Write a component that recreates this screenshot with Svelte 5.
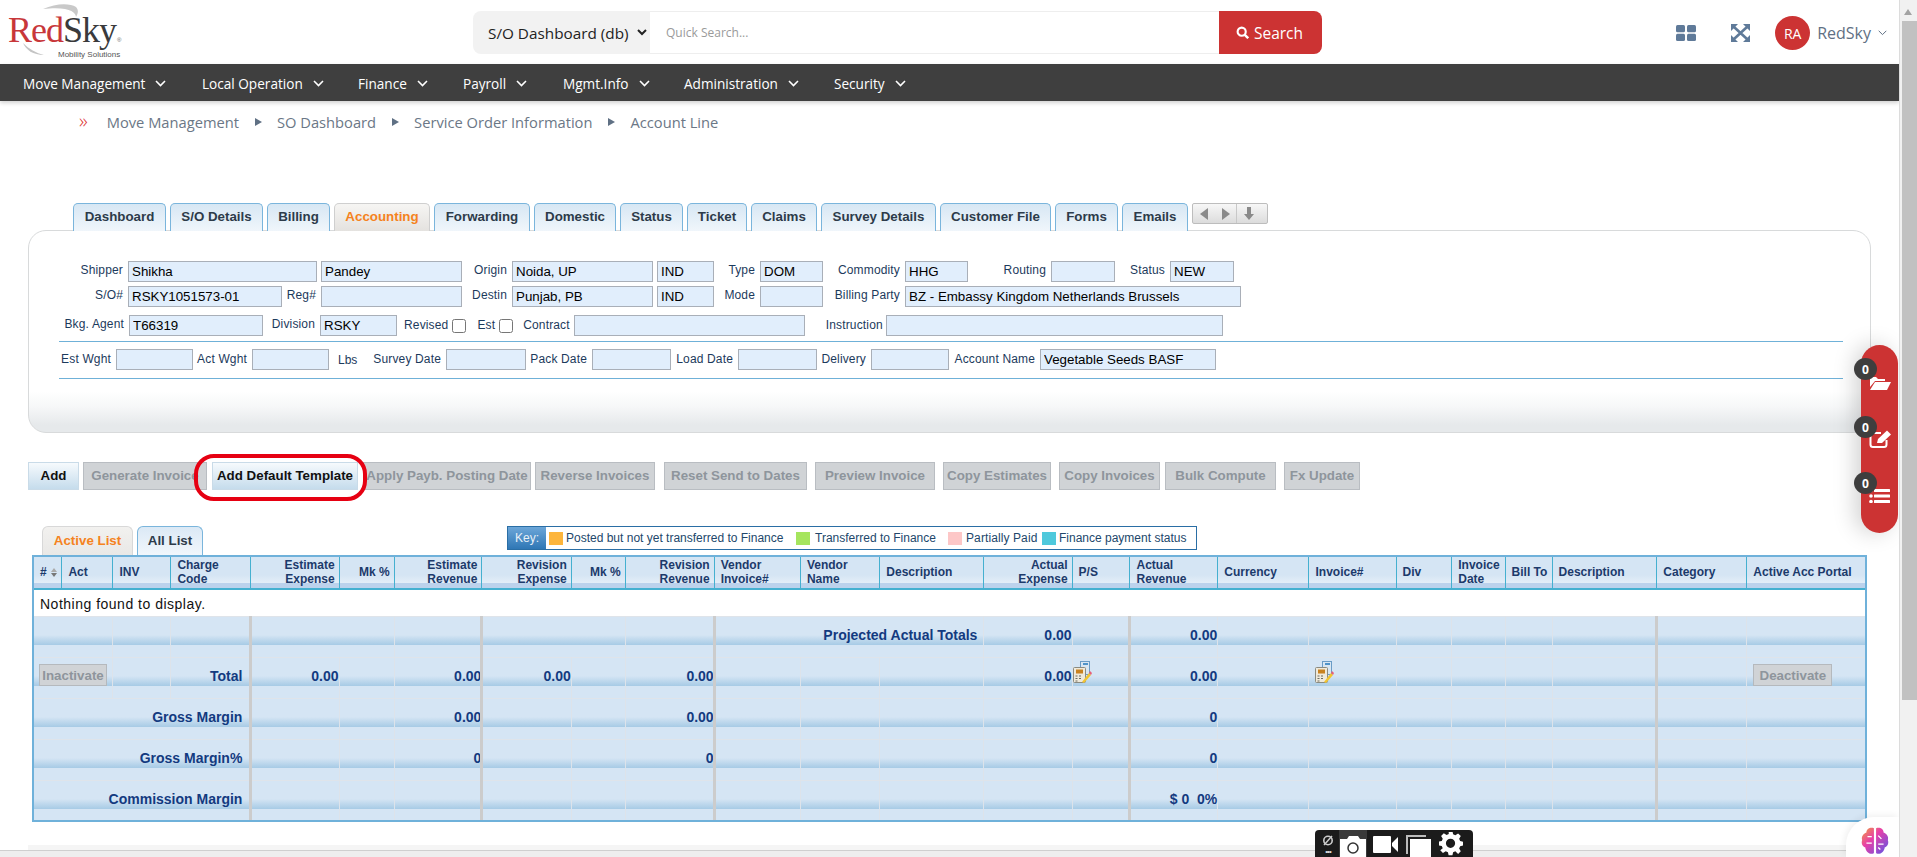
<script>
  const nav = [['Move Management',179], ['Local Operation',156], ['Finance',105], ['Payroll',100], ['Mgmt.Info',121], ['Administration',150], ['Security',100]];
  const crumbs = ['Move Management', 'SO Dashboard', 'Service Order Information', 'Account Line'];
  const tabs = [['Dashboard',93],['S/O Details',93],['Billing',63],['Accounting',96],['Forwarding',96],['Domestic',82],['Status',63],['Ticket',60],['Claims',66],['Survey Details',115],['Customer File',111],['Forms',63],['Emails',66]];

  function layoutRow(items) {
    let x = 59;
    return items.map((it) => {
      const [label, l, r, value] = it;
      const seg = { label, labelW: l - x, w: r - l, value };
      x = r;
      return seg;
    });
  }
  const rows = [
    { cls: 'r1', items: [['Shipper',128,317,'Shikha'],['',321,462,'Pandey'],['Origin',512,653,'Noida, UP'],['',657,714,'IND'],['Type',760,823,'DOM'],['Commodity',905,968,'HHG'],['Routing',1051,1115,''],['Status',1170,1234,'NEW']] },
    { cls: 'r2', items: [['S/O#',128,282,'RSKY1051573-01'],['Reg#',321,462,''],['Destin',512,653,'Punjab, PB'],['',657,714,'IND'],['Mode',760,823,''],['Billing Party',905,1241,'BZ - Embassy Kingdom Netherlands Brussels']] },
    { cls: 'r3', items: [['Bkg. Agent',129,263,'T66319'],['Division',320,397,'RSKY']] , extra: true },
    { cls: 'r4', items: [['Est Wght',116,193,''],['Act Wght',252,329,''],['Survey Date',446,526,''],['Pack Date',592,671,''],['Load Date',738,817,''],['Delivery',871,949,''],['Account Name',1040,1216,'Vegetable Seeds BASF']] }
  ].map((r) => ({ ...r, segs: layoutRow(r.items) }));

  const btnData = [['Add',28,79,1],['Generate Invoice',83,207,0],['Add Default Template',212,358,1],['Apply Payb. Posting Date',363,531,0],['Reverse Invoices',535,655,0],['Reset Send to Dates',664,807,0],['Preview Invoice',815,935,0],['Copy Estimates',943,1051,0],['Copy Invoices',1059,1160,0],['Bulk Compute',1165,1276,0],['Fx Update',1284,1360,0]];
  let prev = 0;
  const buttons = btnData.map(([t, l, r, on]) => {
    const b = { t, ml: l - prev, w: r - l, on };
    prev = r;
    return b;
  });

  const edges = [34,62.4,113.5,171.4,251.4,339.6,394.7,482.4,571.8,625.7,714.7,801,880.4,984.5,1072.7,1130.6,1218.4,1309.6,1396.7,1452.4,1505.7,1552.7,1657.5,1747.5,1865];
  const widths = edges.slice(1).map((e, i) => e - edges[i]);
  const heads = [['#','l'],['Act','l'],['INV','l'],['Charge Code','l'],['Estimate Expense','r'],['Mk %','r'],['Estimate Revenue','r'],['Revision Expense','r'],['Mk %','r'],['Revision Revenue','r'],['Vendor Invoice#','l'],['Vendor Name','l'],['Description','l'],['Actual Expense','r'],['P/S','l'],['Actual Revenue','l'],['Currency','l'],['Invoice#','l'],['Div','l'],['Invoice Date','l'],['Bill To','l'],['Description','l'],['Category','l'],['Active Acc Portal','l']];
</script>

{#snippet calc()}
  <svg class="calc" width="19" height="22" viewBox="0 0 19 22"><rect x="7.500" y=".5" width="9" height="13" fill="#d8e6f2" stroke="#6a9cc6"/><rect x="10" y="2" width="5" height="2" fill="#4f93c9"/><rect x=".5" y="6.500" width="12" height="15" rx="1" fill="#efe9da" stroke="#8b8b80"/><rect x="3" y="8.500" width="7" height="4" fill="#c9821f"/><path d="M2.500 15h2M6 15h2M2.500 17.500h2M6 17.500h2M2.500 20h2" stroke="#6b6b60"/><path d="M9 21l7-9 2 2-7 8z" fill="#f2c430"/><path d="M16 12l1-2 2 2-1 2z" fill="#e6607a"/></svg>
{/snippet}

<div class="page">
  <header class="top">
    <div class="logo">
      <svg class="swoosh" width="125" height="64" viewBox="0 0 125 64" aria-hidden="true">
        <path d="M43 9 C56 3 70 3 76 7 C79 10 78 14 76 17 C76 12 68 6 43 9Z" fill="#c9c9c9"/>
        <path d="M23 43 C26 50 33 55 44 55 C36 53 29 49 23 43Z" fill="#c4c4c4"/>
      </svg>
      <div class="wordmark"><span class="red">Red</span><span class="sky">Sky</span><sup>®</sup></div>
      <div class="mobility">Mobility Solutions</div>
    </div>
    <div class="search">
      <select class="scope"><option>S/O Dashboard (db)</option></select>
      <input class="quick" placeholder="Quick Search..." />
      <button class="go">
        <svg width="13" height="13" viewBox="0 0 16 16"><circle cx="7" cy="7" r="5" fill="none" stroke="#fff" stroke-width="2.600"/><path d="M10.500 10.500 L15 15" stroke="#fff" stroke-width="3"/></svg>
        Search
      </button>
    </div>
    <div class="tools">
      <svg class="grid" width="20" height="16" viewBox="0 0 20 16"><g fill="#5f7a99"><rect width="9" height="7.200" rx="1.500"/><rect x="11" width="9" height="7.200" rx="1.500"/><rect y="8.800" width="9" height="7.200" rx="1.500"/><rect x="11" y="8.800" width="9" height="7.200" rx="1.500"/></g></svg>
      <svg class="expand" width="19" height="18" viewBox="0 0 19 18"><g fill="#5f7a99"><path d="M0 0h7L0 7zM19 0h-7l7 7zM0 18h7l-7-7zM19 18h-7l7-7z"/></g><path d="M3 3l13 12M16 3L3 15" stroke="#5f7a99" stroke-width="2.600"/></svg>
      <span class="avatar">RA</span>
      <span class="user">RedSky</span>
      <svg width="9" height="6" viewBox="0 0 9 6"><path d="M.7.8l3.800 3.800L8.300.8" fill="none" stroke="#5f7084" stroke-width="1"/></svg>
    </div>
  </header>

  <nav class="nav">
    {#each nav as [item, w]}
      <span class="nav-item" style="width:{w}px">{item}
        <svg width="11" height="7" viewBox="0 0 11 7"><path d="M1 1l4.500 4.500L10 1" fill="none" stroke="#fff" stroke-width="1.600"/></svg>
      </span>
    {/each}
  </nav>

  <div class="crumbs">
    <span class="dbl">»</span>
    {#each crumbs as c, i}
      {#if i > 0}<span class="tri"></span>{/if}
      <span class="crumb">{c}</span>
    {/each}
  </div>

  <div class="tabs">
    {#each tabs as [t, w]}
      <span class="tab" class:cur={t === 'Accounting'} style="width:{w}px">{t}</span>
    {/each}
    <span class="pager">
      <i class="arr l"></i><i class="arr r"></i><b class="sep"></b>
      <svg width="10" height="13" viewBox="0 0 10 13"><path d="M3 0h4v7h3l-5 6-5-6h3z" fill="#8a8a8a"/></svg>
    </span>
  </div>

  <section class="panel">
    {#each rows as row}
      <div class="frow {row.cls}">
        {#each row.segs as s}
          <span class="lab" class:empty={!s.label} style="width:{s.labelW}px">{s.label}</span>
          <input class="fld" style="width:{s.w}px" readonly value={s.value} />
        {/each}
        {#if row.extra}
          <span class="chk-lab rv">Revised</span><input type="checkbox" class="cb" />
          <span class="chk-lab es">Est</span><input type="checkbox" class="cb" />
          <span class="chk-lab ct">Contract</span><input class="fld w-contract" readonly />
          <span class="chk-lab ins">Instruction</span><input class="fld w-instr" readonly />
        {/if}
      </div>
      {#if row.cls === 'r3'}<hr class="rule first" />{/if}
      {#if row.cls === 'r4'}<hr class="rule second" />{/if}
    {/each}
    <span class="lbs">Lbs</span>
  </section>

  <div class="actions">
    {#each buttons as b}
      <button class="act" class:on={b.on} style="margin-left:{b.ml}px;width:{b.w}px">{b.t}</button>
    {/each}
  </div>

  <div class="listbar">
    <span class="ltab cur">Active List</span>
    <span class="ltab">All List</span>
    <div class="key">
      <span class="key-h">Key:</span>
      <i class="sw orange"></i><span class="kt k1">Posted but not yet transferred to Finance</span>
      <i class="sw green"></i><span class="kt k2">Transferred to Finance</span>
      <i class="sw pink"></i><span class="kt k3">Partially Paid</span>
      <i class="sw cyan"></i><span class="kt k4">Finance payment status</span>
    </div>
  </div>

  <table class="grid-t">
    <colgroup>
      {#each widths as w}<col style="width:{w}px" />{/each}
    </colgroup>
    <thead>
      <tr>
        {#each heads as [h, a], i}
          <th class={a}>{h}{#if i === 0}<span class="sort"><i class="up"></i><i class="dn"></i></span>{/if}</th>
        {/each}
      </tr>
    </thead>
    <tbody>
      <tr class="none"><td colspan="24">Nothing found to display.</td></tr>
      <tr class="ft">
        <td colspan="2"></td><td></td><td class="tk"></td>
        <td colspan="2"></td><td class="tk"></td><td colspan="2"></td><td class="tk"></td>
        <td class="lbl" colspan="3">Projected Actual Totals</td>
        <td class="val">0.00</td><td class="tk"></td><td class="val">0.00</td>
        <td></td><td></td><td></td><td></td><td></td><td class="tk"></td><td></td><td></td>
      </tr>
      <tr class="ft">
        <td colspan="2" class="btncell"><span class="mini in">Inactivate</span></td><td></td>
        <td class="lbl tk">Total</td>
        <td class="val">0.00</td><td></td><td class="val tk">0.00</td><td class="val">0.00</td><td></td>
        <td class="val tk">0.00</td><td></td><td></td><td></td>
        <td class="val">0.00</td>
        <td class="tk icell">{@render calc()}</td>
        <td class="val">0.00</td><td></td>
        <td class="icell i2c">{@render calc()}</td>
        <td></td><td></td><td></td><td class="tk"></td><td></td>
        <td class="btncell de"><span class="mini out">Deactivate</span></td>
      </tr>
      <tr class="ft">
        <td colspan="4" class="lbl tk">Gross Margin</td>
        <td></td><td></td><td class="val tk">0.00</td><td></td><td></td>
        <td class="val tk">0.00</td><td></td><td></td><td></td><td></td>
        <td class="tk"></td><td class="val">0</td>
        <td></td><td></td><td></td><td></td><td></td><td class="tk"></td><td></td><td></td>
      </tr>
      <tr class="ft">
        <td colspan="4" class="lbl tk">Gross Margin%</td>
        <td></td><td></td><td class="val tk">0</td><td></td><td></td>
        <td class="val tk">0</td><td></td><td></td><td></td><td></td>
        <td class="tk"></td><td class="val">0</td>
        <td></td><td></td><td></td><td></td><td></td><td class="tk"></td><td></td><td></td>
      </tr>
      <tr class="ft last">
        <td colspan="4" class="lbl tk">Commission Margin</td>
        <td></td><td></td><td class="tk"></td><td></td><td></td>
        <td class="tk"></td><td></td><td></td><td></td><td></td>
        <td class="tk"></td><td class="val">$ 0&nbsp;&nbsp;0%</td>
        <td></td><td></td><td></td><td></td><td></td><td class="tk"></td><td></td><td></td>
      </tr>
    </tbody>
  </table>

  <div class="foot"><div class="foot-a"></div><div class="foot-b"></div></div>

  <div class="ring"></div>

  <aside class="pill">
    <span class="badge b1">0</span>
    <span class="badge b2">0</span>
    <span class="badge b3">0</span>
    <svg class="ic i1" width="22" height="15" viewBox="0 0 22 15"><path d="M1 2h6l2 2h7v2H6L1 12z" fill="#fff"/><path d="M6 7h16l-4 8H1z" fill="#fff"/></svg>
    <svg class="ic i2" width="24" height="19" viewBox="0 0 24 19"><path d="M12 3H4a2.500 2.500 0 0 0-2.500 2.500v9A2.500 2.500 0 0 0 4 17h11a2.500 2.500 0 0 0 2.500-2.500V10" fill="none" stroke="#fff" stroke-width="2"/><path d="M8 13l1-4 9-8.500 4 4L13 13z" fill="#fff"/></svg>
    <svg class="ic i3" width="21" height="14" viewBox="0 0 21 14"><g fill="#fff"><rect x="5" y="0" width="16" height="3" rx=".5"/><rect x="5" y="5.500" width="16" height="3" rx=".5"/><rect x="5" y="11" width="16" height="3" rx=".5"/><circle cx="2" cy="1.500" r="1.800"/><circle cx="2" cy="7" r="1.800"/><circle cx="2" cy="12.500" r="1.800"/></g></svg>
  </aside>

  <div class="rec">
    <span class="rec-a">
      <svg width="12" height="13" viewBox="0 0 12 13"><circle cx="6" cy="6.500" r="4.200" fill="none" stroke="#ccc" stroke-width="1.600"/><path d="M2 11L10 2" stroke="#ccc" stroke-width="1.500"/></svg>
      <em>•••</em>
    </span>
    <span class="cam"><svg width="26" height="22" viewBox="0 0 26 22"><path d="M0 4h7l2-3h9l2 3h6v18H0z" fill="#fff"/><circle cx="13" cy="13" r="5" fill="none" stroke="#333" stroke-width="1.500"/></svg></span>
    <svg class="vid" width="25" height="17" viewBox="0 0 25 17"><rect width="18" height="17" rx="1" fill="#fff"/><path d="M19 7l6-6v15l-6-6z" fill="#fff"/></svg>
    <svg class="cp" width="25" height="22" viewBox="0 0 25 22"><path d="M0 0h20v2H2v17H0z" fill="#bbb"/><rect x="4" y="4" width="21" height="18" fill="#fff"/></svg>
    <svg class="gear" width="24" height="24" viewBox="0 0 24 24"><path fill="#fff" fill-rule="evenodd" d="M10 0h4l.7 3.300 2.300 1 2.900-1.800 2.800 2.800L21 8.200l1 2.300 3 .7v4l-3 .7-1 2.300 1.700 2.900-2.800 2.800L17 21.200l-2.300 1-.7 3h-4l-.7-3-2.300-1-2.900 1.700-2.800-2.800L3.900 18l-1-2.300-3-.7v-4l3-.7 1-2.300L2.200 5.100 5 2.300l2.900 1.800 2.300-1zM12 8a4.800 4.800 0 1 0 0 9.600A4.800 4.800 0 0 0 12 8z" transform="translate(0 -1) scale(.96)"/></svg>
  </div>

  <div class="brain">
    <svg width="30" height="30" viewBox="0 0 28 28">
      <defs><linearGradient id="bg" x1="0" y1="0" x2="1" y2="1"><stop offset="0" stop-color="#f2a03a"/><stop offset=".4" stop-color="#e83fa8"/><stop offset="1" stop-color="#5a55e8"/></linearGradient></defs>
      <path d="M13 2C9 1 6 3 6 6 3 7 1 10 2 13c-1 3 0 6 3 7 0 3 3 6 6 6 1 0 2-.5 2-1zM15 2c4-1 7 1 7 4 3 1 5 4 4 7 1 3 0 6-3 7 0 3-3 6-6 6-1 0-2-.5-2-1z" fill="url(#bg)"/>
      <path d="M7 10h4M6 16h5M17 9l3 3M17 17h5M19 22l-2-2" stroke="#fff" stroke-width="1.200" fill="none"/>
    </svg>
  </div>

  <div class="sbar">
    <i class="sb-up"></i>
    <div class="sb-thumb"></div>
  </div>
</div>

<style>
  :global(body) { margin: 0; background: #fff; overflow: hidden; }
  * { box-sizing: border-box; }
  .page { position: relative; width: 1917px; height: 857px; overflow: hidden; padding-right: 18px; font-family: "Liberation Sans", Arial, sans-serif; }

  .top { display: flex; align-items: flex-start; height: 64px; }
  .logo { position: relative; width: 473px; height: 64px; flex: none; }
  .swoosh { position: absolute; left: 0; top: 0; }
  .wordmark { position: absolute; left: 8px; top: 10px; font-family: "Liberation Serif", serif; font-size: 36px; line-height: 40px; letter-spacing: -1px; white-space: nowrap; }
  .red { color: #c8373a; }
  .sky { color: #3a3a3c; }
  .wordmark sup { font-size: 6px; color: #666; font-family: "Liberation Sans", sans-serif; vertical-align: baseline; letter-spacing: 0; margin-left: 1px; }
  .mobility { position: absolute; left: 58px; top: 50px; font-size: 8px; color: #555; white-space: nowrap; }

  .search { display: flex; margin-top: 11px; height: 43px; width: 849px; flex: none; }
  .scope { width: 177px; height: 43px; border: 0; background: #f2f2f2; border-radius: 8px 0 0 8px; padding-left: 11px; font: 15.300px "Open Sans", sans-serif; color: #222; outline: 0; }
  .quick { flex: 1; min-width: 0; height: 43px; border: 1px solid #eee; border-left: 0; border-right: 0; padding: 0 16px; font: 12px "Open Sans", sans-serif; outline: 0; }
  .quick::placeholder { color: #9a9a9a; }
  .go { width: 103px; height: 43px; border: 0; background: #cc3333; color: #fff; border-radius: 0 8px 8px 0; font: 15.500px "Open Sans", sans-serif; display: flex; align-items: center; justify-content: center; gap: 5px; padding: 0 2px 0 0; }

  .tools { display: flex; align-items: center; height: 34px; margin-top: 16px; margin-left: auto; padding-right: 12px; }
  .grid { margin-top: -1px; }
  .expand { margin-left: 35px; }
  .avatar { width: 35px; height: 34px; border-radius: 50%; background: #cc3333; color: #fff; font: 14px "Open Sans", sans-serif; display: flex; align-items: center; justify-content: center; margin-left: 25px; }
  .user { font: 16px "Open Sans", sans-serif; color: #5f7084; margin-left: 7px; margin-right: 7px; }

  .nav { display: flex; height: 37px; background: #3f3f3f; align-items: center; padding: 2px 0 0 23px; box-shadow: 0 2px 4px rgba(0,0,0,.18); }
  .nav-item { color: #fff; font: 13.600px "Open Sans", sans-serif; display: flex; align-items: center; gap: 10px; white-space: nowrap; flex: none; }

  .crumbs { display: flex; align-items: center; height: 42px; padding-left: 79px; font: 14.700px "Open Sans", sans-serif; color: #6b7786; }
  .dbl { color: #d33; font-size: 20px; font-weight: 300; line-height: 1; margin-right: 19px; margin-top: -3px; }
  .tri { width: 0; height: 0; border-left: 7px solid #5f7084; border-top: 4.500px solid transparent; border-bottom: 4.500px solid transparent; margin: 0 15px 0 16px; }

  .tabs { display: flex; gap: 4px; margin-top: 60px; padding-left: 73px; height: 27px; position: relative; z-index: 1; }
  .tab { height: 28px; border: 1px solid #7ab5dc; border-bottom: 0; border-radius: 5px 5px 0 0; background: linear-gradient(#d7e7f4, #f0f6fb); font-size: 13.330px; font-weight: bold; color: #2d3b4a; display: flex; align-items: center; justify-content: center; padding-bottom: 3px; white-space: nowrap; }
  .tab.cur { background: linear-gradient(#f6f5f3, #e4e2df); border-color: #cfcfcf; color: #f58220; }
  .pager { width: 76px; height: 21px; border: 1px solid #bdbdbd; border-radius: 2px; background: linear-gradient(#f7f7f7, #dcdcdc); display: flex; align-items: center; padding-left: 7px; }
  .arr { width: 0; height: 0; border-top: 6px solid transparent; border-bottom: 6px solid transparent; }
  .arr.l { border-right: 8px solid #8a8a8a; }
  .arr.r { border-left: 8px solid #8a8a8a; margin-left: 14px; }
  .sep { width: 1px; height: 19px; background: #c8c8c8; margin: 0 7px 0 6px; }

  .panel { position: relative; margin: 0 28px; width: 1843px; height: 203px; border: 1px solid #d8dadb; border-radius: 18px; padding-top: 30px; background: linear-gradient(#fff 0, #fff 160px, #f6f7f8 176px, #e6e9eb 194px, #e6e9eb 100%); }
  .frow { display: flex; align-items: flex-start; margin-left: 30px; height: 21px; }
  .r2 { margin-top: 4px; }
  .r3 { margin-top: 8px; }
  .r4 { margin-top: 7px; }
  .lab { font-size: 12px; letter-spacing: .15px; color: #1c3a5c; text-align: right; padding-right: 5px; white-space: nowrap; line-height: 18px; flex: none; }
  .lab.empty { padding-right: 0; }
  .r4 .lab { line-height: 20px; }
  .fld { height: 21px; border: 1px solid #a9afb8; background: #e1eefc; font: 13.330px "Liberation Sans", sans-serif; color: #000; padding: 0 3px; flex: none; outline: 0; }
  .cb { width: 14px; height: 14px; margin: 4px 0 0 4px; flex: none; }
  .chk-lab { font-size: 12px; letter-spacing: .15px; color: #1c3a5c; line-height: 21px; white-space: nowrap; }
  .rv { margin-left: 7px; }
  .es { margin-left: 11px; }
  .ct { margin-left: 10px; margin-right: 4px; }
  .w-contract { width: 231px; }
  .ins { margin-left: 21px; margin-right: 3px; }
  .w-instr { width: 337px; }
  .rule { border: 0; height: 1px; background: #6fb1d8; margin: 5px 0 0 30px; width: 1784px; }
  .rule.second { margin-top: 8px; }
  .lbs { position: absolute; left: 309px; top: 122px; font-size: 12px; color: #1c3a5c; line-height: 14px; }

  .actions { display: flex; margin-top: 29px; height: 28px; }
  .act { height: 28px; padding: 0 0 2px; flex: none; font: bold 13.330px "Liberation Sans", sans-serif; border: 1px solid #b9bdc2; background: #d0d3d6; color: #8e959c; white-space: nowrap; overflow: hidden; }
  .act.on { background: linear-gradient(#f6fafd, #c5dcec); border-color: #c9dbe8; color: #111; }

  .listbar { position: relative; display: flex; gap: 4px; margin-top: 36px; padding-left: 42px; height: 29px; align-items: flex-start; }
  .ltab { height: 29px; border: 1px solid #7ab5dc; border-bottom: 0; border-radius: 6px 6px 0 0; width: 66px; background: linear-gradient(#dbe9f5, #f1f7fc); font-size: 13.330px; font-weight: bold; color: #2d3b4a; display: flex; align-items: center; justify-content: center; padding-bottom: 2px; }
  .ltab.cur { width: 91px; background: linear-gradient(#f2f1ef, #e9e8e6); border-color: #d8d8d8; color: #f58220; }
  .key { position: absolute; left: 507px; top: 0; width: 690px; height: 24px; border: 1px solid #2a6ea5; display: flex; align-items: center; background: #fff; }
  .key-h { width: 38px; height: 22px; background: linear-gradient(#6ca6d8, #2f77b5); color: #e8f1f8; font-size: 12px; display: flex; align-items: center; justify-content: center; }
  .sw { width: 14px; height: 13px; flex: none; }
  .orange { background: #fdb53c; margin-left: 3px; }
  .green { background: #a5e55e; margin-left: 8px; }
  .pink { background: #fdc7c7; margin-left: 8px; }
  .cyan { background: #4fc9dc; margin-left: 9px; }
  .kt { font-size: 12px; color: #22476b; white-space: nowrap; margin-left: 3px; }
  .k1 { width: 222px; }
  .k2 { width: 125px; margin-left: 5px; }
  .k3 { width: 67px; margin-left: 4px; letter-spacing: .1px; }
  .k4 { margin-left: 3px; }

  .grid-t { table-layout: fixed; border-collapse: separate; border-spacing: 0; width: 1835px; margin-left: 32px; border: 2px solid #6fb1da; }
  .grid-t th { height: 33px; padding: 0 4px 1px 6px; font-size: 12px; line-height: 14px; font-weight: bold; color: #1c3a6b; border-right: 1px solid #45b0d0; border-bottom: 2px solid #45b0d0; background: linear-gradient(#d5e5f4 0, #d5e5f4 18px, #e4eef8 26px, #bcd2ec 26.500px, #bcd2ec 100%); white-space: normal; vertical-align: middle; }
  .grid-t th:last-child { border-right: 0; }
  th.l { text-align: left; }
  th.r { text-align: right; }
  .sort { display: inline-block; margin-left: 4px; vertical-align: middle; }
  .sort i { display: block; width: 0; height: 0; border-left: 3.500px solid transparent; border-right: 3.500px solid transparent; margin: 1px 0; }
  .sort .up { border-bottom: 4px solid #aaa; }
  .sort .dn { border-top: 4px solid #777; }
  .none td { height: 26px; padding: 2px 0 0 6px; background: #fff; font-size: 14px; letter-spacing: .5px; color: #111; }
  .ft td { height: 41px; padding: 0 0 4px; border-top: 1px solid #dfe4ea; border-right: 1px solid #dde3ea; background: linear-gradient(#d5e5f4 0, #d5e5f4 18px, #a9cce6 27.500px, #d5e5f4 28px, #d5e5f4 100%); font-size: 14px; font-weight: bold; color: #133a80; text-align: right; white-space: nowrap; vertical-align: middle; }
  .ft.last td { height: 40px; }
  .ft td:last-child { border-right: 0; }
  .ft td.tk { position: relative; }
  .ft td.tk::after { content: ""; position: absolute; top: -1px; bottom: 0; right: -2px; width: 3px; background: #cccccc; }
  .ft td.lbl { padding-right: 6px; }
  .ft td.lbl.tk { padding-right: 8px; }
  .ft td.btncell { text-align: left; padding: 6px 0 0 5px; vertical-align: top; }
  .ft td.de { padding-left: 6px; }
  .mini { display: inline-flex; align-items: center; justify-content: center; height: 22px; border: 1px solid #b5b9bd; background: #d0d3d6; color: #8e959c; font-size: 13.330px; }
  .mini.in { width: 68px; }
  .mini.out { width: 79px; }
  .ft td.icell { text-align: left; vertical-align: top; padding: 0; }
  .ft td.i2c { padding-left: 6px; }
  .calc { display: block; margin-top: 3px; }

  .foot { position: absolute; left: 0; top: 845px; width: 1899px; height: 12px; }
  .foot-a { height: 5px; margin-left: 28px; background: #f5f5f5; }
  .foot-b { height: 7px; border-top: 1px solid #cfcfcf; background: #eeeeee; }

  .ring { position: absolute; left: 194px; top: 454px; width: 173px; height: 47px; border: 4px solid #e60012; border-radius: 20px; }

  .pill { position: absolute; left: 1861px; top: 345px; width: 37px; height: 188px; border-radius: 19px; background: #cc3333; box-shadow: -6px 0 22px rgba(0,0,0,.18); }
  .badge { position: absolute; left: -7px; width: 23px; height: 22px; border-radius: 50%; background: #3e3e3e; color: #fff; font: bold 12px "Open Sans", sans-serif; display: flex; align-items: center; justify-content: center; z-index: 1; }
  .b1 { top: 13px; }
  .b2 { top: 71px; }
  .b3 { top: 127px; }
  .ic { position: absolute; left: 8px; }
  .i1 { top: 30px; }
  .i2 { top: 85px; }
  .i3 { top: 144px; }

  .rec { position: absolute; left: 1315px; top: 830px; width: 158px; height: 27px; background: #1b1b1b; border-radius: 4px 4px 0 0; display: flex; align-items: flex-end; padding-left: 5px; }
  .rec-a { width: 16px; height: 27px; display: flex; flex-direction: column; align-items: center; padding-top: 4px; }
  .rec-a em { font-style: normal; color: #ddd; font-size: 8px; line-height: 9px; letter-spacing: -1px; }
  .cam { width: 28px; height: 27px; background: #3a3a3a; margin-left: 3px; display: flex; align-items: flex-end; justify-content: center; overflow: hidden; }
  .vid { margin: 0 0 4px 6px; }
  .cp { margin: 0 0 0 8px; }
  .gear { margin: 0 0 1px 8px; }

  .brain { position: absolute; left: 1846px; top: 817px; width: 53px; height: 40px; border-radius: 28px 0 0 0; background: #fff; box-shadow: -2px -2px 6px rgba(0,0,0,.06); display: flex; align-items: center; justify-content: center; padding: 8px 0 0 4px; }

  .sbar { position: absolute; right: 0; top: 0; width: 18px; height: 857px; background: #f1f1f1; border-left: 1px solid #dcdcdc; }
  .sb-up { position: absolute; left: 4px; top: 9px; width: 0; height: 0; border-left: 4.500px solid transparent; border-right: 4.500px solid transparent; border-bottom: 6px solid #a3a3a3; }
  .sb-thumb { position: absolute; left: 2px; top: 21px; width: 16px; height: 679px; background: #c1c1c1; }
</style>
